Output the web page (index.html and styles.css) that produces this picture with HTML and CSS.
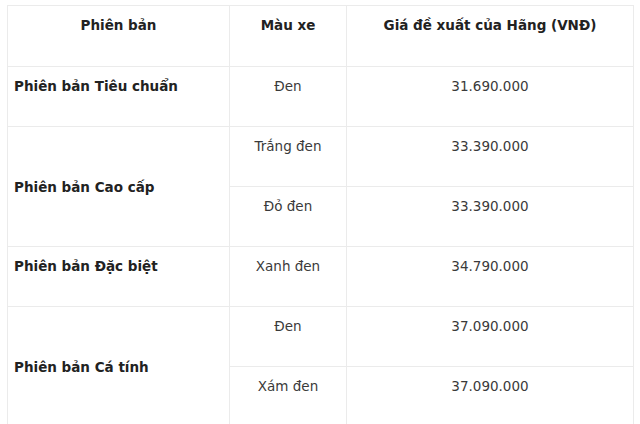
FILE: index.html
```html
<!DOCTYPE html>
<html lang="vi">
<head>
<meta charset="utf-8">
<link rel="stylesheet" href="styles.css">
</head>
<body>
<div class="wrap">
<table class="price">
  <colgroup>
    <col class="c1"><col class="c2"><col class="c3">
  </colgroup>
  <thead>
    <tr>
      <th class="cell head">Phiên bản</th>
      <th class="cell head">Màu xe</th>
      <th class="cell head">Giá đề xuất của Hãng (VNĐ)</th>
    </tr>
  </thead>
  <tbody>
    <tr>
      <td class="cell name">Phiên bản Tiêu chuẩn</td>
      <td class="cell val">Đen</td>
      <td class="cell val">31.690.000</td>
    </tr>
    <tr>
      <td class="cell name merged" rowspan="2">Phiên bản Cao cấp</td>
      <td class="cell val">Trắng đen</td>
      <td class="cell val">33.390.000</td>
    </tr>
    <tr>
      <td class="cell val">Đỏ đen</td>
      <td class="cell val">33.390.000</td>
    </tr>
    <tr>
      <td class="cell name">Phiên bản Đặc biệt</td>
      <td class="cell val">Xanh đen</td>
      <td class="cell val">34.790.000</td>
    </tr>
    <tr>
      <td class="cell name merged" rowspan="2">Phiên bản Cá tính</td>
      <td class="cell val">Đen</td>
      <td class="cell val">37.090.000</td>
    </tr>
    <tr>
      <td class="cell val">Xám đen</td>
      <td class="cell val">37.090.000</td>
    </tr>
  </tbody>
</table>
</div>
</body>
</html>
```
FILE: styles.css
```css
html, body {
  margin: 0;
  padding: 0;
  background: #ffffff;
}
.wrap {
  padding: 5px 0 0 7px;
}
.price {
  border-collapse: collapse;
  table-layout: fixed;
  width: 626px;
  font-family: "DejaVu Sans", Verdana, sans-serif;
  font-size: 13.5px;
  color: #333333;
}
.c1 { width: 222px; }
.c2 { width: 117px; }
.c3 { width: 287px; }
.cell {
  border: 1px solid #ebebeb;
  padding: 9px 6px 30px;
  line-height: 20px;
  height: 20px;
  vertical-align: top;
  text-align: center;
  font-weight: normal;
}
.head {
  font-weight: bold;
  color: #222222;
  padding-bottom: 31px;
}
.name {
  text-align: left;
  font-weight: bold;
  color: #222222;
}
.val {
  color: #3a3a3a;
}
.merged {
  padding: 10px 6px;
  vertical-align: middle;
}
```
